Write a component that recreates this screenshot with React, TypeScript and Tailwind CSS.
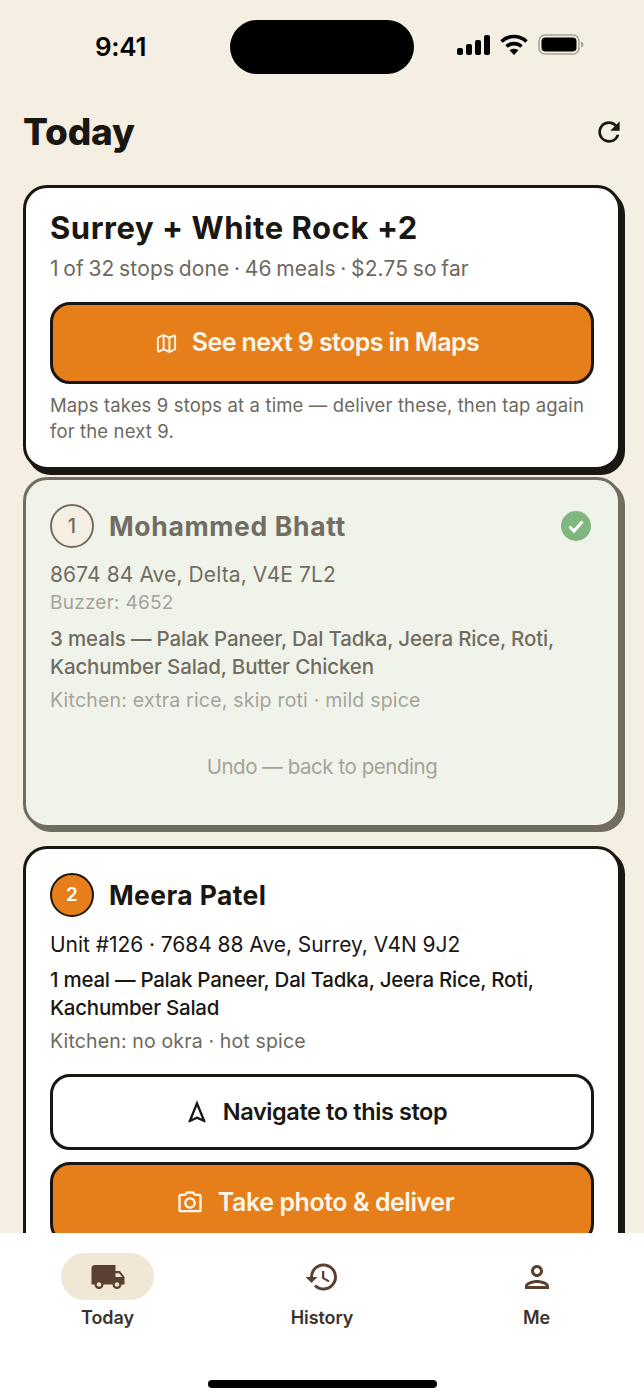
import { Map } from "lucide-react";
import {
  MdHistory,
  MdLocalShipping,
  MdOutlineNavigation,
  MdOutlinePerson,
  MdOutlinePhotoCamera,
  MdRefresh,
} from "react-icons/md";

function StatusBar() {
  return (
    <div className="relative flex h-[94px] shrink-0 items-start justify-between pl-[95px] pr-[60px] pt-[30px]">
      <span className="text-[26px] font-semibold leading-[34px] tracking-[-0.3px] text-black">
        9:41
      </span>
      <div className="absolute left-[230px] top-[20px] h-[54px] w-[184px] rounded-[27px] bg-black" />
      <div className="flex items-center pt-[4px]">
        <svg width="33" height="20" viewBox="0 0 33 20" fill="#000">
          <rect x="0" y="13" width="6" height="7" rx="2" />
          <rect x="9" y="9" width="6" height="11" rx="2" />
          <rect x="18" y="5" width="6" height="15" rx="2" />
          <rect x="27" y="0" width="6" height="20" rx="2" />
        </svg>
        <svg className="ml-[10px]" width="28" height="21" viewBox="0 0 28 21" fill="none" stroke="#000" strokeWidth="3.6">
          <path d="M1.5 7.5C8.5 .8 19.5 .8 26.5 7.5" />
          <path d="M6.5 12.5C10.8 8.6 17.2 8.6 21.5 12.5" />
          <path d="M14 21l-4.4-4.8c2.6-2 6.2-2 8.8 0z" fill="#000" stroke="none" />
        </svg>
        <svg className="ml-[10px]" width="46" height="21" viewBox="0 0 46 21" fill="none">
          <rect x="1" y="1" width="40" height="19" rx="6" stroke="#a8a297" strokeWidth="1.6" />
          <rect x="3.5" y="3.5" width="35" height="14" rx="4" fill="#000" />
          <path d="M43 7.5c1.6.5 2.4 1.6 2.4 3s-.8 2.5-2.4 3z" fill="#a8a297" />
        </svg>
      </div>
    </div>
  );
}

function OrangeButton({ icon, label, inset }: { icon: React.ReactNode; label: string; inset: string }) {
  return (
    <div
      className={`flex h-[82px] shrink-0 items-center justify-center gap-[14px] rounded-[20px] border-[3px] border-[#1a1712] bg-[#e67e19] text-[25px] font-semibold text-[#fdf6ea] ${inset}`}
    >
      {icon}
      {label}
    </div>
  );
}

function SummaryCard() {
  return (
    <section className="rounded-[24px] border-[3px] border-[#1a1712] bg-white px-6 pb-[23px] pt-[20px] shadow-[4px_5px_0_#1a1712]">
      <h2 className="text-[31px] font-bold leading-[40px] tracking-[0.55px] text-[#1a1712]">
        Surrey + White Rock +2
      </h2>
      <p className="mt-[6px] text-[21px] leading-[30px] tracking-[0.15px] text-[#6d695f] [word-spacing:-1.5px]">
        1 of 32 stops done · 46 meals · $2.75 so far
      </p>
      <div className="mt-[18px]">
        <OrangeButton
          inset="pr-[10px] tracking-[-0.6px]"
          icon={<Map size={23} strokeWidth={2} />}
          label="See next 9 stops in Maps"
        />
      </div>
      <p className="mt-[8px] text-[18.5px] leading-[26px] tracking-[0.13px] text-[#6d695f]">
        Maps takes 9 stops at a time — deliver these, then tap again for the next 9.
      </p>
    </section>
  );
}

function DoneCard() {
  return (
    <section className="mt-[7px] h-[351px] rounded-[24px] border-[3px] border-[#716d61] bg-[#f0f3ea] px-6 pt-[24px] shadow-[4px_4px_0_#716d61]">
      <div className="flex items-center gap-[15px]">
        <div className="flex size-[44px] items-center justify-center rounded-full border-2 border-[#716d61] bg-[#f5efe3] text-[20px] font-medium text-[#716d61]">
          1
        </div>
        <h3 className="flex-1 text-[26.5px] font-bold leading-[34px] tracking-[0.65px] text-[#716d61]">
          Mohammed Bhatt
        </h3>
        <div className="mr-[3px] flex size-[30px] items-center justify-center rounded-full bg-[#7fb77e]">
          <svg width="20" height="20" viewBox="0 0 20 20" fill="none" stroke="#fff" strokeWidth="3">
            <path d="M3.5 10.5l4.5 4.5 8.5-9.5" />
          </svg>
        </div>
      </div>
      <p className="mt-[12px] text-[21px] leading-[30px] tracking-[0.1px] text-[#716d61]">
        8674 84 Ave, Delta, V4E 7L2
      </p>
      <p className="mt-[1px] text-[19px] leading-[24px] tracking-[0.25px] text-[#a6a499]">Buzzer: 4652</p>
      <p className="mt-[10px] text-[20.5px] font-medium leading-[28px] tracking-[-0.15px] text-[#716d61]">
        3 meals — Palak Paneer, Dal Tadka, Jeera Rice, Roti, Kachumber Salad, Butter Chicken
      </p>
      <p className="mt-[5px] text-[19.5px] leading-[28px] tracking-[0.2px] text-[#a6a499]">
        Kitchen: extra rice, skip roti · mild spice
      </p>
      <p className="mt-[39px] text-center text-[20.5px] leading-[28px] tracking-[-0.45px] text-[#a6a499]">
        Undo — back to pending
      </p>
    </section>
  );
}

function ActiveCard() {
  return (
    <section className="mt-[18px] rounded-[24px] border-[3px] border-[#1a1712] bg-white px-6 pb-[20px] pt-[24px] shadow-[4px_4px_0_#1a1712]">
      <div className="flex items-center gap-[15px]">
        <div className="flex size-[44px] items-center justify-center rounded-full border-2 border-[#1a1712] bg-[#e67e19] text-[19px] font-semibold text-white">
          2
        </div>
        <h3 className="text-[26.5px] font-bold leading-[34px] tracking-[0.4px] text-[#1a1712]">Meera Patel</h3>
      </div>
      <p className="mt-[13px] text-[21px] leading-[30px] tracking-[-0.05px] text-[#1a1712]">
        Unit #126 · 7684 88 Ave, Surrey, V4N 9J2
      </p>
      <p className="mt-[6px] text-[20.5px] font-medium leading-[28px] tracking-[-0.25px] text-[#1a1712]">
        1 meal — Palak Paneer, Dal Tadka, Jeera Rice, Roti, Kachumber Salad
      </p>
      <p className="mt-[5px] text-[19.5px] leading-[28px] tracking-[0.15px] text-[#6d695f]">
        Kitchen: no okra · hot spice
      </p>
      <div className="mt-[19px] flex h-[76px] items-center justify-center gap-[12px] rounded-[20px] border-[3px] border-[#1a1712] bg-white pr-[14px] text-[23.5px] font-semibold tracking-[-0.4px] text-[#1a1712]">
        <MdOutlineNavigation size={28} />
        Navigate to this stop
      </div>
      <div className="mt-[12px]">
        <OrangeButton
          inset="pr-[14px] tracking-[-0.45px]"
          icon={<MdOutlinePhotoCamera size={28} />}
          label="Take photo & deliver"
        />
      </div>
    </section>
  );
}

function NavItem({ icon, label, active }: { icon: React.ReactNode; label: string; active?: boolean }) {
  return (
    <div className="flex flex-col items-center">
      <div
        className={`flex h-[47px] w-[93px] items-center justify-center rounded-[24px] text-[#5a4030] ${active ? "bg-[#f0e7d6]" : ""}`}
      >
        {icon}
      </div>
      <span className="mt-[6px] text-[18px] font-semibold leading-[24px] tracking-[-0.1px] text-[#3a332b]">
        {label}
      </span>
    </div>
  );
}

export default function App() {
  return (
    <main className="relative flex h-[1400px] w-[644px] flex-col overflow-hidden bg-[#f5efe3] font-['Inter',sans-serif]">
      <StatusBar />
      <header className="flex h-[91px] shrink-0 items-start justify-between pl-[23px] pr-[19px] pt-[15px]">
        <h1 className="text-[37px] font-extrabold leading-[46px] tracking-[-0.2px] text-[#1a1712]">Today</h1>
        <MdRefresh size={32} className="mt-[7px] text-[#1a1712]" />
      </header>
      <div className="flex-1 overflow-hidden px-[23px]">
        <SummaryCard />
        <DoneCard />
        <ActiveCard />
      </div>
      <nav className="absolute inset-x-0 bottom-0 h-[167px] bg-white">
        <div className="grid grid-cols-3 pt-[20px]">
          <div className="pl-[61px]">
            <div className="w-[93px]">
              <NavItem active icon={<MdLocalShipping size={36} />} label="Today" />
            </div>
          </div>
          <div className="flex justify-center">
            <NavItem icon={<MdHistory size={36} />} label="History" />
          </div>
          <div className="flex justify-end pr-[61px]">
            <NavItem icon={<MdOutlinePerson size={36} />} label="Me" />
          </div>
        </div>
        <div className="absolute bottom-[12px] left-[208px] h-[8px] w-[229px] rounded-full bg-black" />
      </nav>
    </main>
  );
}
